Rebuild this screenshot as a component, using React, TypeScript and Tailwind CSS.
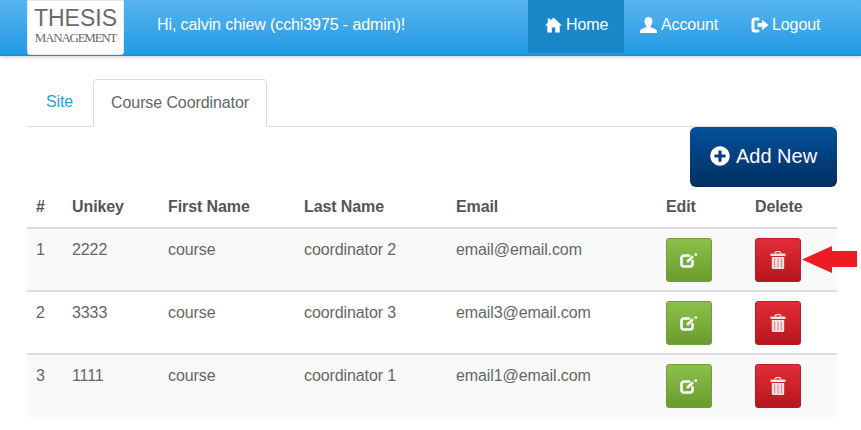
import type { ReactNode } from "react";
import { FaPlusCircle } from "react-icons/fa";

type Row = { id: number; unikey: string; first: string; last: string; email: string };

const rows: Row[] = [
  { id: 1, unikey: "2222", first: "course", last: "coordinator 2", email: "email@email.com" },
  { id: 2, unikey: "3333", first: "course", last: "coordinator 3", email: "email3@email.com" },
  { id: 3, unikey: "1111", first: "course", last: "coordinator 1", email: "email1@email.com" },
];

const headers = ["#", "Unikey", "First Name", "Last Name", "Email", "Edit", "Delete"];

function HomeIcon() {
  return (
    <svg viewBox="0 0 18 16" className="h-[16px] w-[17px] fill-white" aria-hidden="true">
      <path d="M9 0L18 8.4H15.6V16H10.8V10.6H7.2V16H2.4V8.4H0L3 5.6V1.2H5.4V3.4Z" />
    </svg>
  );
}

function UserIcon() {
  return (
    <svg viewBox="0 0 17 16" className="h-[16px] w-[17px] fill-white" aria-hidden="true">
      <path d="M8.5 0C11 0 12.5 1.8 12.5 4.2C12.5 6.2 11.6 8 10.6 8.8V10.2C12.6 11 17 12 17 14V16H0V14C0 12 4.4 11 6.4 10.2V8.8C5.4 8 4.5 6.2 4.5 4.2C4.5 1.8 6 0 8.5 0Z" />
    </svg>
  );
}

function LogoutIcon() {
  return (
    <svg viewBox="0 0 18 16" className="h-[16px] w-[18px]" aria-hidden="true">
      <path d="M7 2H4C2.9 2 2 2.9 2 4V12C2 13.1 2.9 14 4 14H7" fill="none" stroke="#fff" strokeWidth="3" strokeLinecap="round" />
      <path d="M6.5 6H11V2.8L17.5 8L11 13.2V10H6.5Z" fill="#fff" />
    </svg>
  );
}

function EditIcon() {
  return (
    <svg viewBox="0 0 18 15" className="h-[15px] w-[18px]" aria-hidden="true">
      <path d="M9 2.5H4C2.6 2.5 1.5 3.6 1.5 5V11C1.5 12.4 2.6 13.5 4 13.5H10C11.4 13.5 12.5 12.4 12.5 11V8" fill="none" stroke="#fff" strokeWidth="2.6" strokeLinecap="round" />
      <path d="M7 9L13 3.2" fill="none" stroke="#fff" strokeWidth="2.6" />
      <circle cx="15.8" cy="1.6" r="1.4" fill="#fff" />
    </svg>
  );
}

function TrashIcon() {
  return (
    <svg viewBox="0 0 16 18" className="h-[18px] w-[16px]" aria-hidden="true">
      <path d="M5 2.6C5 1 6 0.5 8 0.5C10 0.5 11 1 11 2.6" fill="none" stroke="#fbe3e4" strokeWidth="1.2" />
      <path d="M0.5 2.6H15.5V5H0.5Z" fill="#fbe3e4" />
      <path d="M1.8 6H14.2V16.5C14.2 17.4 13.6 18 12.8 18H3.2C2.4 18 1.8 17.4 1.8 16.5Z" fill="#fbe3e4" />
      <path d="M4.6 7.5V16.5M8 7.5V16.5M11.4 7.5V16.5" stroke="#e8888e" strokeWidth="1.2" />
    </svg>
  );
}

function NavItem({ icon, label, className }: { icon: ReactNode; label: string; className: string }) {
  return (
    <a className={`flex h-[53px] items-center pb-[3px] text-white ${className}`}>
      {icon}
      <span>{label}</span>
    </a>
  );
}

export default function App() {
  return (
    <div className="h-[430px] w-[861px] overflow-hidden bg-white font-['Liberation_Sans',Arial,sans-serif] text-[16px] tracking-[-0.1px] text-[#666]">
      <header className="flex h-[56px] items-start border-b border-[#1a8fd8] bg-gradient-to-b from-[#55b4ee] to-[#1e9ae5] pl-[27px] shadow-[0_1px_4px_rgba(0,0,0,0.2)]">
        <div className="flex h-[55px] w-[97px] flex-col items-center rounded-b-[3px] border border-[#e8e8e8] bg-white pt-[4px] text-[#6a6a6a] font-['Liberation_Serif',serif]">
          <span className="font-['Liberation_Sans',sans-serif] text-[23px] leading-[26px] tracking-[0px]">THESIS</span>
          <span className="text-[13px] leading-[13px] tracking-[-1.25px]">MANAGEMENT</span>
        </div>
        <p className="ml-[33px] h-[53px] flex-1 pt-[15px] text-[16px] leading-[20px] text-white">
          Hi, calvin chiew (cchi3975 - admin)!
        </p>
        <nav className="mr-[24px] flex h-[53px] text-[16px]">
          <NavItem icon={<HomeIcon />} label="Home" className="w-[96px] gap-[4px] bg-[#1a87c9] pl-[17px]" />
          <NavItem icon={<UserIcon />} label="Account" className="w-[111px] gap-[4px] pl-[16px]" />
          <NavItem icon={<LogoutIcon />} label="Logout" className="w-[102px] gap-[3px] pl-[16px]" />
        </nav>
      </header>

      <main className="relative pl-[27px] pt-[23px]">
        <div className="flex h-[48px] w-[810px] items-end border-b border-[#ddd]">
          <a className="flex h-[48px] w-[66px] items-center justify-center pr-[1px] text-[#2aa0e8]">Site</a>
          <a className="-mb-px flex h-[48px] w-[174px] items-center justify-center rounded-t-[4px] border border-[#ddd] border-b-white bg-white text-[#666]">
            Course Coordinator
          </a>
        </div>

        <div className="flex w-[810px] justify-end">
          <button className="flex h-[60px] w-[147px] items-center justify-center gap-[6px] rounded-[6px] bg-gradient-to-b from-[#04519b] to-[#022f62] pb-[3px] text-[20px] tracking-normal text-white">
            <FaPlusCircle className="h-[20px] w-[20px]" />
            Add New
          </button>
        </div>

        <table className="w-[810px] table-fixed border-collapse">
          <colgroup>
            <col className="w-[36px]" />
            <col className="w-[96px]" />
            <col className="w-[136px]" />
            <col className="w-[152px]" />
            <col className="w-[210px]" />
            <col className="w-[89px]" />
            <col className="w-[91px]" />
          </colgroup>
          <thead>
            <tr className="h-[41px] border-b-2 border-[#ddd] text-left">
              {headers.map((h) => (
                <th key={h} className="px-[9px] pt-[9px] align-top font-bold leading-[22px] text-[#555]">
                  {h}
                </th>
              ))}
            </tr>
          </thead>
          <tbody>
            {rows.map((r) => (
              <tr key={r.id} className="h-[63px] border-t-2 border-[#ddd] first:border-t-0 odd:bg-[#f9f9f9]">
                <td className="px-[9px] pt-[10px] align-top leading-[22px]">{r.id}</td>
                <td className="px-[9px] pt-[10px] align-top leading-[22px]">{r.unikey}</td>
                <td className="px-[9px] pt-[10px] align-top leading-[22px]">{r.first}</td>
                <td className="px-[9px] pt-[10px] align-top leading-[22px]">{r.last}</td>
                <td className="px-[9px] pt-[10px] align-top leading-[22px]">{r.email}</td>
                <td className="px-[9px] pt-[9px] align-top">
                  <button className="flex h-[44px] w-[46px] items-center justify-center rounded-[3px] border border-[#6f9f36] bg-gradient-to-b from-[#8cc04a] to-[#6a9c2e]">
                    <EditIcon />
                  </button>
                </td>
                <td className="px-[9px] pt-[9px] align-top">
                  <button className="flex h-[44px] w-[46px] items-center justify-center rounded-[3px] border border-[#b71c24] bg-gradient-to-b from-[#e22d38] to-[#b5161e]">
                    <TrashIcon />
                  </button>
                </td>
              </tr>
            ))}
          </tbody>
        </table>

        {/* annotation arrow drawn over the screenshot */}
        <svg viewBox="0 0 55 27" className="absolute left-[802px] top-[190px] h-[27px] w-[55px]" aria-hidden="true">
          <path d="M0 13.5L30 0V5H55V21H30V27Z" fill="#ed1c24" />
        </svg>
      </main>
    </div>
  );
}
